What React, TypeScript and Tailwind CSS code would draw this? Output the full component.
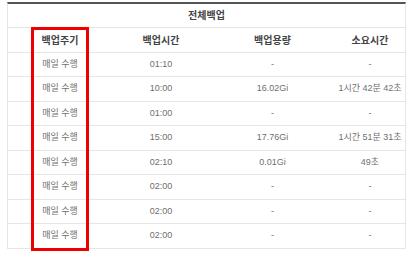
import React from 'react';

interface Row {
  cycle: string;
  time: string;
  size: string;
  took: string;
}

const rows: Row[] = [
  { cycle: '매일 수행', time: '01:10', size: '-', took: '-' },
  { cycle: '매일 수행', time: '10:00', size: '16.02Gi', took: '1시간 42분 42초' },
  { cycle: '매일 수행', time: '01:00', size: '-', took: '-' },
  { cycle: '매일 수행', time: '15:00', size: '17.76Gi', took: '1시간 51분 31초' },
  { cycle: '매일 수행', time: '02:10', size: '0.01Gi', took: '49초' },
  { cycle: '매일 수행', time: '02:00', size: '-', took: '-' },
  { cycle: '매일 수행', time: '02:00', size: '-', took: '-' },
  { cycle: '매일 수행', time: '02:00', size: '-', took: '-' },
];

const font = { fontFamily: '"Liberation Sans", "Noto Sans CJK KR", sans-serif' };

export default function App() {
  return (
    <div className="w-[416px] h-[264px] bg-white pl-[7px] pt-[2px]" style={font}>
      <div className="relative w-[399px]">
        <div className="border-t-2 border-[#555] border-x border-x-[#e6e6e6]">
          <div className="h-[24px] flex items-center justify-center border-b border-[#e6e6e6] text-[10px] font-bold text-[#444]">
            전체백업
          </div>
          <div className="h-[25px] grid grid-cols-[104px_98px_125px_70px] items-center text-center border-b border-[#e6e6e6] text-[10px] font-bold text-[#444]">
            <span>백업주기</span>
            <span>백업시간</span>
            <span>백업용량</span>
            <span>소요시간</span>
          </div>
          {rows.map((r, i) => (
            <div
              key={i}
              className={
                i % 2 === 0
                  ? 'h-[24px] grid grid-cols-[104px_98px_125px_70px] items-center text-center border-b border-[#e6e6e6] text-[9px] text-[#707070]'
                  : 'h-[25px] grid grid-cols-[104px_98px_125px_70px] items-center text-center border-b border-[#e6e6e6] text-[9px] text-[#707070]'
              }
            >
              <span>{r.cycle}</span>
              <span>{r.time}</span>
              <span>{r.size}</span>
              <span className="whitespace-nowrap">{r.took}</span>
            </div>
          ))}
        </div>
        <div className="absolute left-[24px] top-[25px] w-[58px] h-[224px] border-[3px] border-[#ee0000]" />
      </div>
    </div>
  );
}
